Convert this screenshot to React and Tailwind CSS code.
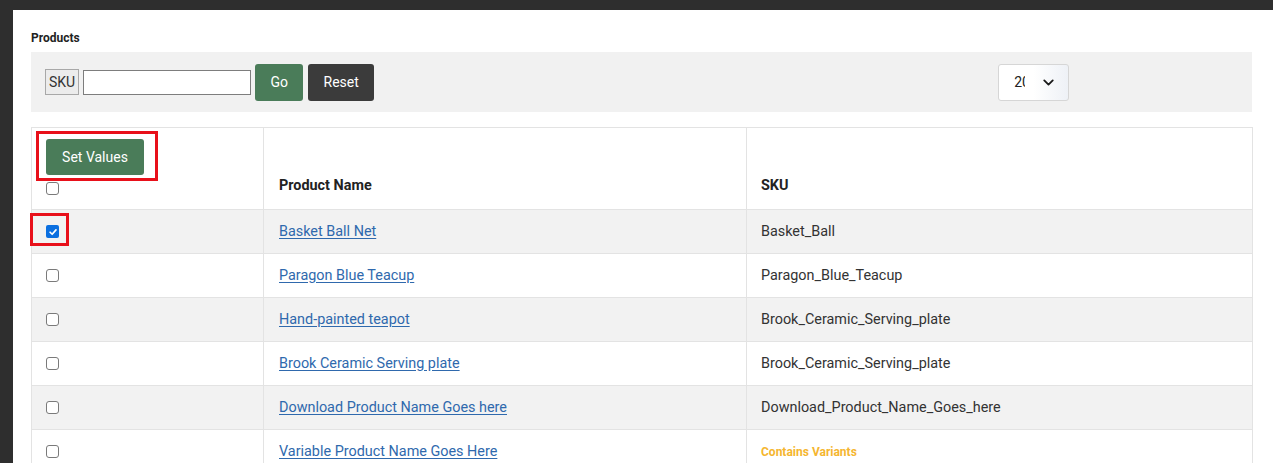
import React from "react";
import { ChevronDown } from "lucide-react";

const rows = [
  { name: "Basket Ball Net", sku: "Basket_Ball", checked: true },
  { name: "Paragon Blue Teacup", sku: "Paragon_Blue_Teacup" },
  { name: "Hand-painted teapot", sku: "Brook_Ceramic_Serving_plate" },
  { name: "Brook Ceramic Serving plate", sku: "Brook_Ceramic_Serving_plate" },
  { name: "Download Product Name Goes here", sku: "Download_Product_Name_Goes_here" },
  { name: "Variable Product Name Goes Here", variants: true },
];

function Checkbox({ checked }) {
  if (checked) {
    return (
      <span className="flex h-[13px] w-[13px] items-center justify-center rounded-[2px] bg-[#0b6fe0]">
        <svg viewBox="0 0 12 12" className="h-[10px] w-[10px]" fill="none" stroke="white" strokeWidth="2" strokeLinecap="round" strokeLinejoin="round">
          <path d="M2.5 6.3 L5 8.7 L9.6 3.4" />
        </svg>
      </span>
    );
  }
  return <span className="block h-[13px] w-[13px] rounded-[3px] border border-[#7a7a7a] bg-white" />;
}

export default function App() {
  return (
    <div
      className="h-[463px] w-[1273px] overflow-hidden bg-[#2e2e2e] pl-[13px] pt-[10px]"
      style={{ fontFamily: "Roboto, 'Liberation Sans', Arial, sans-serif" }}
    >
      <div className="h-full bg-white pl-[18px] pr-[21px] pt-[21px]">
        <div className="text-[12px] font-bold leading-[14px] text-[#222]">Products</div>

        {/* filter bar */}
        <div className="mt-[7px] flex h-[60px] items-center bg-[#f1f1f1] pl-[14px]">
          <span className="flex h-[26px] items-center border border-[#a8a8a8] bg-[#ececec] px-[3px] text-[14px] text-[#333]">
            SKU
          </span>
          <span className="ml-[4px] block h-[25px] w-[168px] border border-[#7d7d7d] bg-white" />
          <button className="ml-[4px] h-[37px] w-[48px] rounded-[3px] bg-[#4a7c59] text-[14px] text-white">Go</button>
          <button className="ml-[5px] h-[37px] w-[66px] rounded-[3px] bg-[#3b3b3b] text-[14px] text-white">Reset</button>
          <div className="ml-[624px] flex h-[37px] w-[71px] items-center rounded-[3px] border border-[#d6d6d6] bg-gradient-to-r from-white via-white to-[#eef1f6] pl-[15px]">
            <span className="w-[11px] overflow-hidden whitespace-nowrap text-[14px] text-[#222]">20</span>
            <ChevronDown className="ml-[15px] h-[17px] w-[17px] text-[#1a1a1a]" strokeWidth={2.6} />
          </div>
        </div>

        {/* products table */}
        <table className="mt-[15px] w-[1221px] table-fixed border-collapse text-[14.4px]">
          <colgroup>
            <col className="w-[232px]" />
            <col className="w-[483px]" />
            <col className="w-[506px]" />
          </colgroup>
          <thead>
            <tr className="h-[82px] bg-white">
              <th className="border border-[#e3e3e3] p-0 text-left align-top">
                <div className="ml-[4px] mt-[3px] w-[122px] border-[3px] border-[#e8101a] pb-[3px] pl-[7px] pt-[5px]">
                  <button className="h-[36px] w-[98px] rounded-[3px] bg-[#4a7c59] text-[14px] font-normal text-white">
                    Set Values
                  </button>
                </div>
                <div className="ml-[14px] mt-px">
                  <Checkbox />
                </div>
              </th>
              <th className="border border-[#e3e3e3] pb-[12px] pl-[15px] text-left align-bottom font-bold text-[#222]">
                Product Name
              </th>
              <th className="border border-[#e3e3e3] pb-[12px] pl-[14px] text-left align-bottom font-bold text-[#222]">
                SKU
              </th>
            </tr>
          </thead>
          <tbody>
            {rows.map((r, i) => (
              <tr key={i} className={i % 2 === 0 ? "h-[44px] bg-[#f2f2f2]" : "h-[44px] bg-white"}>
                <td className="relative border border-[#e3e3e3] p-0 pl-[14px] align-middle">
                  <Checkbox checked={r.checked} />
                  {r.checked && (
                    <span className="absolute left-[-2px] top-[3px] h-[33px] w-[39px] border-[3px] border-[#e8101a]" />
                  )}
                </td>
                <td className="border border-[#e3e3e3] pl-[15px] align-middle">
                  <a className="text-[#2f69ad] underline underline-offset-2">{r.name}</a>
                </td>
                <td className="border border-[#e3e3e3] pl-[14px] align-middle">
                  {r.variants ? (
                    <span className="text-[12px] font-bold text-[#f5b630]">Contains Variants</span>
                  ) : (
                    <span className="text-[#333]">{r.sku}</span>
                  )}
                </td>
              </tr>
            ))}
          </tbody>
        </table>
      </div>
    </div>
  );
}
